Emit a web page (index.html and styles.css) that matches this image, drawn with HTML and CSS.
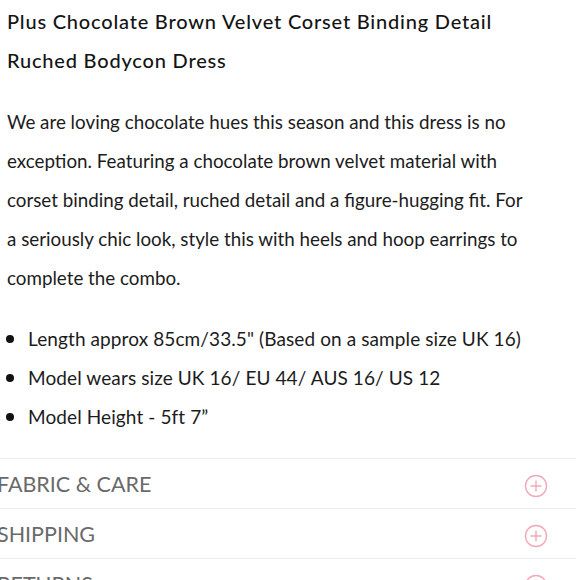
FILE: index.html
```html
<!DOCTYPE html>
<html lang="en">
<head>
<meta charset="utf-8">
<title>Product details</title>
<link rel="stylesheet" href="styles.css">
</head>
<body>
<main class="page">
  <h1 class="title">Plus Chocolate Brown Velvet Corset Binding Detail Ruched Bodycon Dress</h1>
  <p class="desc">We are loving chocolate hues this season and this dress is no exception. Featuring a chocolate brown velvet material with corset binding detail, ruched detail and a figure-hugging fit. For a seriously chic look, style this with heels and hoop earrings to complete the combo.</p>
  <ul class="specs">
    <li class="spec"><span class="dot"></span><span>Length approx 85cm/33.5" (Based on a sample size UK 16)</span></li>
    <li class="spec"><span class="dot"></span><span>Model wears size UK 16/ EU 44/ AUS 16/ US 12</span></li>
    <li class="spec"><span class="dot"></span><span>Model Height - 5ft 7”</span></li>
  </ul>
  <section class="accordion">
    <div class="acc-row"><span class="acc-label">FABRIC &amp; CARE</span><svg class="acc-icon" viewBox="0 0 24 24" width="24" height="24"><circle cx="12" cy="12" r="10.5"/><path d="M12 6.5v11M6.5 12h11"/></svg></div>
    <div class="acc-row"><span class="acc-label">SHIPPING</span><svg class="acc-icon" viewBox="0 0 24 24" width="24" height="24"><circle cx="12" cy="12" r="10.5"/><path d="M12 6.5v11M6.5 12h11"/></svg></div>
    <div class="acc-row"><span class="acc-label">RETURNS</span><svg class="acc-icon" viewBox="0 0 24 24" width="24" height="24"><circle cx="12" cy="12" r="10.5"/><path d="M12 6.5v11M6.5 12h11"/></svg></div>
  </section>
</main>
</body>
</html>
```
FILE: styles.css
```css
html, body {
  margin: 0;
  padding: 0;
  background: #fff;
}
body {
  font-family: "Lato", "Liberation Sans", sans-serif;
  color: #1c1c1c;
  overflow: hidden;
  height: 580px;
}
.page {
  padding: 2px 0 0 7px;
}
.title {
  margin: 0;
  font-size: 20px;
  font-weight: 500;
  line-height: 39px;
  letter-spacing: 0.8px;
  color: #141414;
  max-width: 510px;
}
.desc {
  margin: 22px 0 0;
  font-size: 18.8px;
  line-height: 39px;
  max-width: 524px;
}
.specs {
  list-style: none;
  margin: 22px 0 0;
  padding: 0;
  font-size: 19px;
  line-height: 39px;
  letter-spacing: 0.1px;
}
.spec {
  display: flex;
  align-items: center;
  gap: 14px;
}
.dot {
  width: 8px;
  height: 8px;
  border-radius: 50%;
  background: #111;
  margin-left: -1px;
  flex: none;
}
.accordion {
  margin: 22px 0 0 -10px;
  width: 579px;
}
.acc-row {
  display: flex;
  justify-content: space-between;
  align-items: center;
  height: 49px;
  border-top: 1px solid #ececec;
  padding-right: 28px;
}
.acc-label {
  font-size: 21.5px;
  font-weight: 400;
  color: #6a6a6a;
}
.acc-icon {
  fill: none;
  stroke: #f2a9b8;
  stroke-width: 1.4;
  margin-top: 4px;
}
```
